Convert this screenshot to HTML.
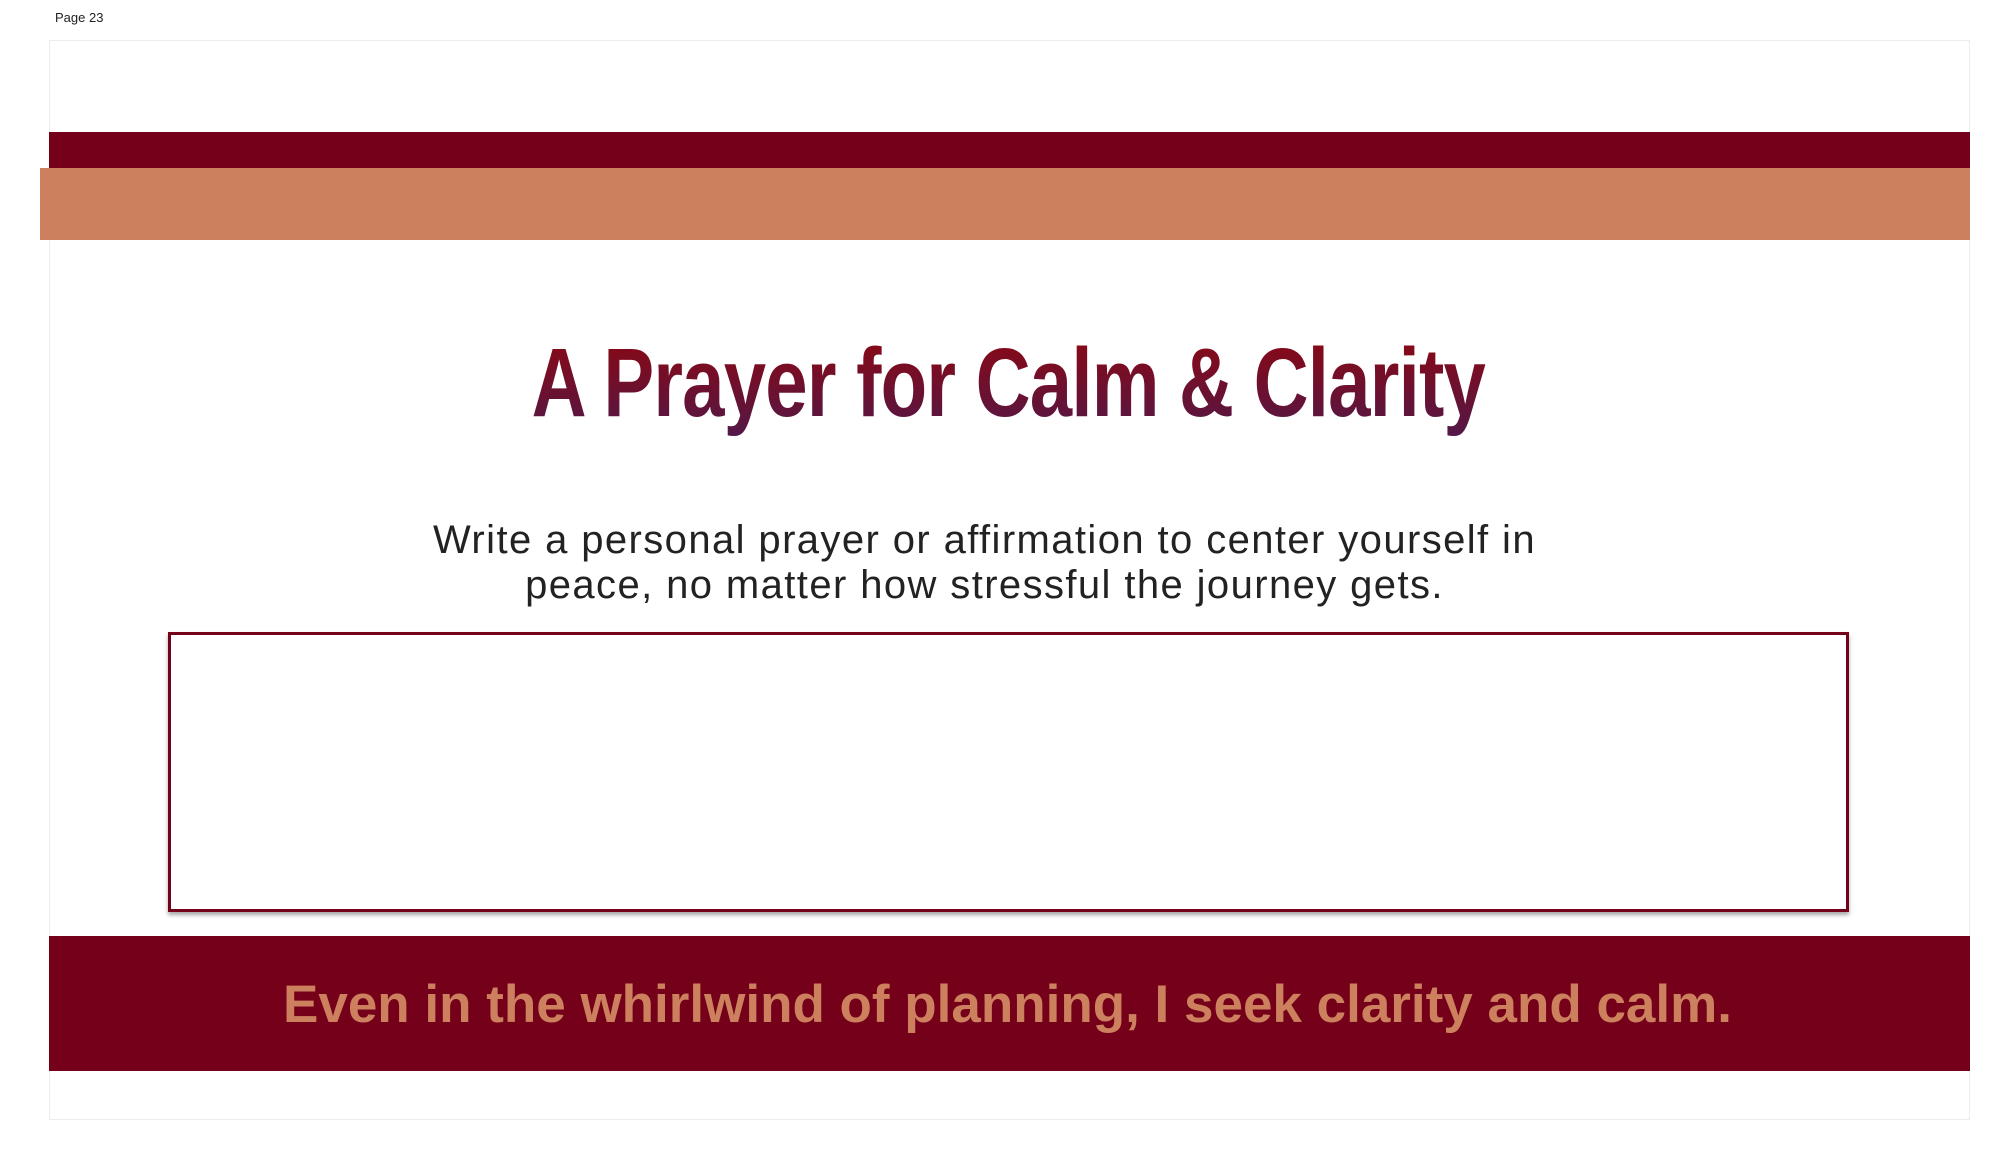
<!DOCTYPE html>
<html><head><meta charset="utf-8"><style>
html,body{margin:0;padding:0;width:2009px;height:1160px;background:#fff;overflow:hidden;position:relative;font-family:"Liberation Sans",sans-serif}
.abs{position:absolute}
</style></head><body>
<div class="abs" style="left:55px;top:10px;font-size:13px;color:#222">Page 23</div>
<div class="abs" style="left:49px;top:40px;width:1921px;height:1080px;border:1px solid #ececec;box-sizing:border-box"></div>
<div class="abs" style="left:49px;top:132px;width:1921px;height:37px;background:#75001a"></div>
<div class="abs" style="left:40px;top:168px;width:1930px;height:72px;background:#cd805e"></div>
<div class="abs" style="left:4px;width:2009px;top:328px;text-align:center">
<span style="display:inline-block;font-family:'Liberation Sans Narrow','Liberation Sans',sans-serif;font-weight:bold;font-size:97px;line-height:110px;letter-spacing:-1px;transform:scaleX(0.785);background:linear-gradient(#8e0710,#521848);-webkit-background-clip:text;background-clip:text;color:transparent">A Prayer for Calm &amp; Clarity</span></div>
<div class="abs" style="left:-20px;width:2009px;top:518px;text-align:center;font-size:40px;letter-spacing:1.4px;line-height:45px;color:#222">Write a personal prayer or affirmation to center yourself in<br>peace, no matter how stressful the journey gets.</div>
<div class="abs" style="left:168px;top:632px;width:1681px;height:280px;border:3px solid #75001a;box-sizing:border-box;box-shadow:0 3px 4px rgba(0,0,0,0.35);background:#fff"></div>
<div class="abs" style="left:49px;top:936px;width:1921px;height:135px;background:#75001a"></div>
<div class="abs" style="left:3px;width:2009px;top:975px;text-align:center;font-size:53px;line-height:60px;font-weight:bold;color:#cd805e">Even in the whirlwind of planning, I seek clarity and calm.</div>
</body></html>
